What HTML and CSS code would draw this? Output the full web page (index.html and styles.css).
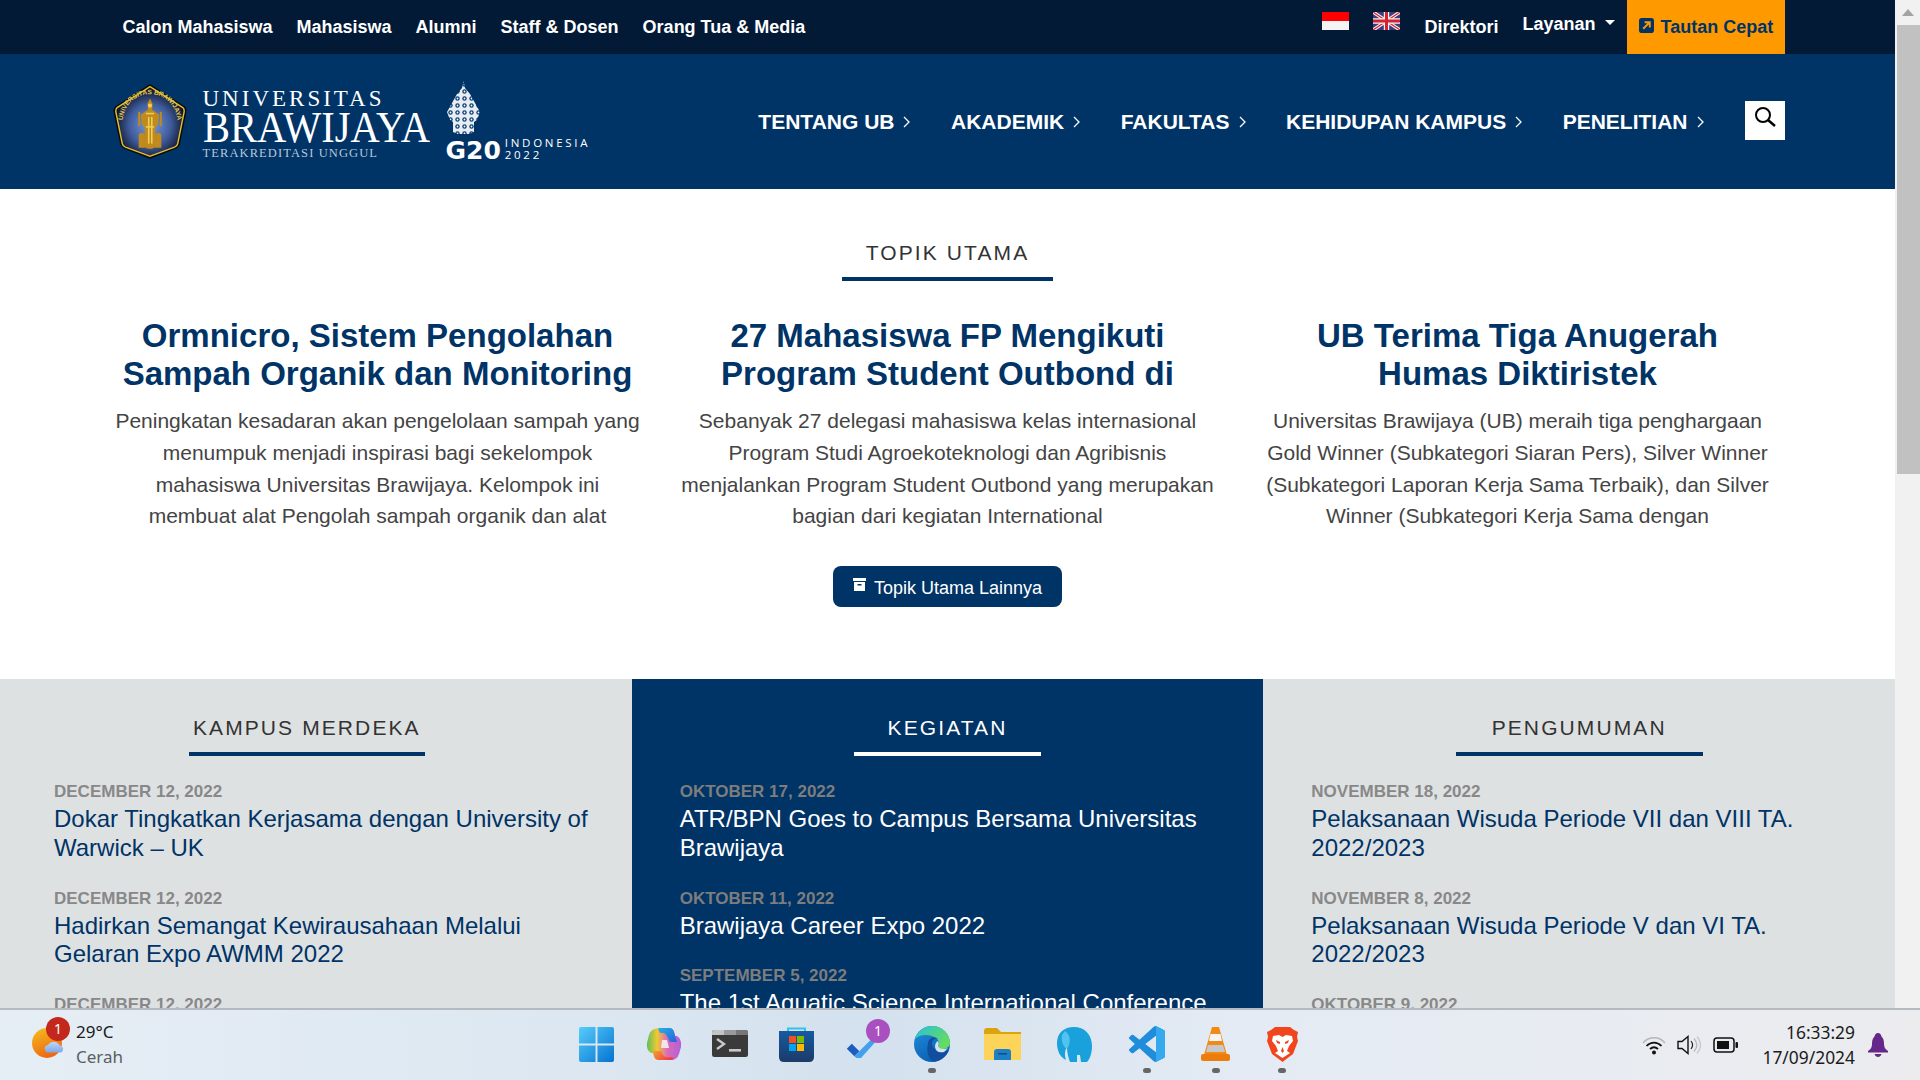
FILE: index.html
```html
<!DOCTYPE html>
<html lang="en">
<head>
  <meta charset="UTF-8">
  <meta name="viewport" content="width=device-width, initial-scale=1.0">
  <title>Universitas Brawijaya</title>
  <link rel="stylesheet" href="styles.css">
</head>
<body>

<div class="window">
  <div class="page">

    <!-- top bar -->
    <div class="topbar">
      <div class="container topbar-inner">
        <nav class="toplinks">
          <a>Calon Mahasiswa</a>
          <a>Mahasiswa</a>
          <a>Alumni</a>
          <a>Staff &amp; Dosen</a>
          <a>Orang Tua &amp; Media</a>
        </nav>
        <div class="topright">
          <svg class="flag" viewBox="0 0 27 18"><rect width="27" height="9" fill="#ff0000"/><rect y="9" width="27" height="9" fill="#f4f4f4"/></svg>
          <svg class="flag flag-uk" viewBox="0 0 27 18">
            <rect width="27" height="18" fill="#3c3b7c"/>
            <path d="M0 0L27 18M27 0L0 18" stroke="#f3f3f3" stroke-width="3.4"/>
            <path d="M0 0L27 18M27 0L0 18" stroke="#d8212f" stroke-width="1.2"/>
            <path d="M13.5 0V18M0 9H27" stroke="#f3f3f3" stroke-width="5.4"/>
            <path d="M13.5 0V18M0 9H27" stroke="#d8212f" stroke-width="3"/>
          </svg>
          <a class="direktori">Direktori</a>
          <a class="layanan">Layanan<span class="caret"></span></a>
          <a class="quick">
            <svg class="quick-icon" viewBox="0 0 16 16"><rect width="16" height="16" rx="3" fill="#003366"/><path d="M4.5 11.5L11 5M6 4.5H11.5V10" fill="none" stroke="#ff9900" stroke-width="2"/></svg>
            Tautan Cepat
          </a>
        </div>
      </div>
    </div>

    <!-- header with logo and main menu -->
    <header class="header">
      <div class="container header-inner">
        <div class="logo">
          <svg class="crest" viewBox="1 0 72 74">
            <defs>
              <radialGradient id="crestFill" cx="50%" cy="55%" r="55%">
                <stop offset="0" stop-color="#7a9ce0"/>
                <stop offset="0.55" stop-color="#3f5c9c"/>
                <stop offset="1" stop-color="#070a18"/>
              </radialGradient>
              <path id="crestArc" d="M10 45C9 22 22 11 37 11S65 22 64 45"/>
            </defs>
            <path d="M37 1L71 23Q73 25 72.500 28L66 60Q65 63 62 64L39 73Q37 74 35 73L12 64Q9 63 8 60L1.500 28Q1 25 3 23Z" fill="#0a0a0a"/>
            <path d="M37 3.500L69 24Q70.500 25 70.300 28L64 59Q63.500 61.500 61 62.500L38 71Q37 71.500 36 71L13 62.500Q10.500 61.500 10 59L3.700 28Q3.500 25 5 24Z" fill="url(#crestFill)" stroke="#e3bf2d" stroke-width="1.4"/>
            <text class="crest-text"><textPath href="#crestArc" startOffset="50%" text-anchor="middle">UNIVERSITAS BRAWIJAYA</textPath></text>
            <g fill="#c08a1c">
              <path d="M37 15L39.500 20L39 26L42 28L46 31L45 40L42 44L43 62L39 64H35L31 62L32 44L29 40L28 31L32 28L35 26L34.500 20Z"/>
              <path d="M26 50Q29 47 32 50V63H26ZM42 50Q45 47 48 50V63H42Z"/>
              <rect x="25.500" y="28" width="2" height="14"/>
              <rect x="46.500" y="28" width="2" height="14"/>
            </g>
            <g fill="#efd055">
              <rect x="35" y="33" width="1.500" height="26"/>
              <rect x="38" y="33" width="1.500" height="26"/>
              <circle cx="37" cy="22" r="2"/>
              <rect x="33" y="29" width="8" height="1.500"/>
              <rect x="33" y="42" width="8" height="1.500"/>
            </g>
          </svg>
          <div class="wordmark">
            <span class="wm-top">UNIVERSITAS</span>
            <span class="wm-name">BRAWIJAYA</span>
            <span class="wm-sub">TERAKREDITASI UNGGUL</span>
          </div>
          <div class="g20">
            <svg class="gunungan" viewBox="0 0 33 53">
              <defs>
                <pattern id="batik" width="7" height="7" patternUnits="userSpaceOnUse">
                  <rect width="7" height="7" fill="#e8edf3"/>
                  <circle cx="3.500" cy="3.500" r="2.200" fill="#0d3f73"/>
                  <circle cx="3.500" cy="3.500" r="0.900" fill="#ffffff"/>
                </pattern>
              </defs>
              <path d="M16.500 0L18 7L23 13L28 22L33 31L30 39L27 41V51L22 53H11L6 51V41L3 39L0 31L5 22L10 13L15 7Z" fill="url(#batik)"/>
            </svg>
            <div class="g20-row">
              <span class="g20-mark">G20</span>
              <span class="g20-place">INDONESIA<br>2022</span>
            </div>
          </div>
        </div>
        <nav class="mainmenu">
          <a>TENTANG UB<svg class="chev" viewBox="0 0 9 14"><path d="M2 2L7 7L2 12"/></svg></a>
          <a>AKADEMIK<svg class="chev" viewBox="0 0 9 14"><path d="M2 2L7 7L2 12"/></svg></a>
          <a>FAKULTAS<svg class="chev" viewBox="0 0 9 14"><path d="M2 2L7 7L2 12"/></svg></a>
          <a>KEHIDUPAN KAMPUS<svg class="chev" viewBox="0 0 9 14"><path d="M2 2L7 7L2 12"/></svg></a>
          <a>PENELITIAN<svg class="chev" viewBox="0 0 9 14"><path d="M2 2L7 7L2 12"/></svg></a>
        </nav>
        <div class="searchbox">
          <svg viewBox="0 0 22 22"><circle cx="9" cy="9" r="7" fill="none" stroke="#000" stroke-width="2"/><path d="M14 14L21 20" stroke="#000" stroke-width="2.400"/></svg>
        </div>
      </div>
    </header>

    <!-- main topics -->
    <section class="topics">
      <div class="section-title-wrap">
        <h2 class="section-title title-topik">TOPIK UTAMA</h2>
      </div>
      <div class="container topic-grid">
        <article class="topic">
          <h3>Ormnicro, Sistem Pengolahan<br>Sampah Organik dan Monitoring</h3>
          <p>Peningkatan kesadaran akan pengelolaan sampah yang<br>menumpuk menjadi inspirasi bagi sekelompok<br>mahasiswa Universitas Brawijaya. Kelompok ini<br>membuat alat Pengolah sampah organik dan alat</p>
        </article>
        <article class="topic">
          <h3>27 Mahasiswa FP Mengikuti<br>Program Student Outbond di</h3>
          <p>Sebanyak 27 delegasi mahasiswa kelas internasional<br>Program Studi Agroekoteknologi dan Agribisnis<br>menjalankan Program Student Outbond yang merupakan<br>bagian dari kegiatan International</p>
        </article>
        <article class="topic">
          <h3>UB Terima Tiga Anugerah<br>Humas Diktiristek</h3>
          <p>Universitas Brawijaya (UB) meraih tiga penghargaan<br>Gold Winner (Subkategori Siaran Pers), Silver Winner<br>(Subkategori Laporan Kerja Sama Terbaik), dan Silver<br>Winner (Subkategori Kerja Sama dengan</p>
        </article>
      </div>
      <div class="more-wrap">
        <a class="more-btn">
          <svg viewBox="0 0 13 13"><path d="M0 0H13V3H0ZM1 4H12V13H1Z" fill="#fff"/><rect x="4.500" y="6" width="4" height="1.500" fill="#003366"/></svg>
          Topik Utama Lainnya
        </a>
      </div>
    </section>

    <!-- news columns -->
    <section class="columns">
      <div class="col col-first">
        <div class="section-title-wrap">
          <h2 class="section-title title-merdeka">KAMPUS MERDEKA</h2>
        </div>
        <div class="news">
          <div class="date">December 12, 2022</div>
          <a class="news-title">Dokar Tingkatkan Kerjasama dengan University of Warwick – UK</a>
        </div>
        <div class="news">
          <div class="date">December 12, 2022</div>
          <a class="news-title">Hadirkan Semangat Kewirausahaan Melalui Gelaran Expo AWMM 2022</a>
        </div>
        <div class="news">
          <div class="date">December 12, 2022</div>
        </div>
      </div>
      <div class="col col-dark">
        <div class="section-title-wrap">
          <h2 class="section-title title-kegiatan">KEGIATAN</h2>
        </div>
        <div class="news">
          <div class="date">Oktober 17, 2022</div>
          <a class="news-title">ATR/BPN Goes to Campus Bersama Universitas Brawijaya</a>
        </div>
        <div class="news">
          <div class="date">Oktober 11, 2022</div>
          <a class="news-title">Brawijaya Career Expo 2022</a>
        </div>
        <div class="news">
          <div class="date">September 5, 2022</div>
          <a class="news-title">The 1st Aquatic Science International Conference</a>
        </div>
      </div>
      <div class="col">
        <div class="section-title-wrap">
          <h2 class="section-title title-pengumuman">PENGUMUMAN</h2>
        </div>
        <div class="news">
          <div class="date">November 18, 2022</div>
          <a class="news-title">Pelaksanaan Wisuda Periode VII dan VIII TA. 2022/2023</a>
        </div>
        <div class="news">
          <div class="date">November 8, 2022</div>
          <a class="news-title">Pelaksanaan Wisuda Periode V dan VI TA. 2022/2023</a>
        </div>
        <div class="news">
          <div class="date">Oktober 9, 2022</div>
        </div>
      </div>
    </section>
  </div>

  <div class="scrollbar">
    <div class="scroll-btn"><span class="scroll-arrow"></span></div>
    <div class="scroll-thumb"></div>
  </div>
</div>

<!-- windows taskbar -->
<footer class="taskbar">
  <div class="weather">
    <div class="weather-icon">
      <svg viewBox="0 0 34 34">
        <defs>
          <linearGradient id="sun" x1="0" y1="0" x2="0.400" y2="1"><stop offset="0" stop-color="#f4c020"/><stop offset="1" stop-color="#ee6a12"/></linearGradient>
          <linearGradient id="cloud" x1="0" y1="0" x2="0" y2="1"><stop offset="0" stop-color="#bcd6f8"/><stop offset="1" stop-color="#7fa8ea"/></linearGradient>
        </defs>
        <circle cx="15" cy="15" r="15" fill="url(#sun)"/>
        <path d="M13 22a3.500 3.500 0 0 1 3-5a7 7 0 0 1 12 0.500a3.500 3.500 0 0 1 3 4.500a3 3 0 0 1-3 2.500H16a3 3 0 0 1-3-2.500Z" fill="url(#cloud)"/>
      </svg>
      <span class="weather-badge">1</span>
    </div>
    <div class="weather-text">
      <div class="temp">29°C</div>
      <div class="cond">Cerah</div>
    </div>
  </div>

  <div class="apps">
    <div class="app app-win">
      <svg viewBox="0 0 36 36">
        <defs><linearGradient id="win" x1="0" y1="0" x2="1" y2="1"><stop offset="0" stop-color="#55cdfb"/><stop offset="1" stop-color="#0672cf"/></linearGradient></defs>
        <path d="M2 0H17V17H0V2Q0 0 2 0ZM19 0H34Q36 0 36 2V17H19ZM0 19H17V36H2Q0 36 0 34ZM19 19H36V34Q36 36 34 36H19Z" fill="url(#win)"/>
      </svg>
    </div>
    <div class="app app-copilot">
      <svg viewBox="0 0 36 34">
        <defs>
          <linearGradient id="cpBase" x1="0" y1="0" x2="1" y2="0"><stop offset="0" stop-color="#5cc05c"/><stop offset="0.3" stop-color="#f0c832"/><stop offset="0.6" stop-color="#d96bb8"/><stop offset="1" stop-color="#b45fd8"/></linearGradient>
          <linearGradient id="cpTop" x1="0" y1="0" x2="1" y2="1"><stop offset="0" stop-color="#20b4e4"/><stop offset="1" stop-color="#2d5fdc"/></linearGradient>
          <linearGradient id="cpBot" x1="0" y1="0" x2="1" y2="0.500"><stop offset="0" stop-color="#f7a02c"/><stop offset="1" stop-color="#ee3f48"/></linearGradient>
        </defs>
        <path d="M14 1H23Q27 1 28 5L29 9H31Q36 12 35 20L33 27Q31 33 25 33H13Q9 33 8 29L7 26H5Q0 23 1 16L3 8Q5 1 14 1Z" fill="url(#cpBase)"/>
        <path d="M12 1.500L14 1H23Q27 1 28 5L31 15H24L21 9Q19 5 14 6Z" fill="url(#cpTop)"/>
        <path d="M8 29L7 24H15L17 28Q19 31 25 30L28 31Q27 33 25 33H13Q9 33 8 29Z" fill="url(#cpBot)"/>
        <path d="M16 13H21L23 21H15Z" fill="#f6e4ea"/>
      </svg>
    </div>
    <div class="app app-term">
      <svg viewBox="0 0 36 27">
        <rect width="36" height="27" rx="2.500" fill="#3a3a3a"/>
        <path d="M0 2.500Q0 0 2.500 0H12V5H0Z" fill="#c4c4c4"/><rect x="12" width="12" height="5" fill="#9a9a9a"/><path d="M24 0H33.500Q36 0 36 2.500V5H24Z" fill="#777"/>
        <path d="M5 9L12 14L5 19" fill="none" stroke="#c8c8c8" stroke-width="2.400"/><rect x="17" y="19" width="12" height="2.600" fill="#c8c8c8"/>
      </svg>
    </div>
    <div class="app app-store">
      <svg viewBox="0 0 35 35">
        <defs><linearGradient id="bag" x1="0" y1="0" x2="0" y2="1"><stop offset="0" stop-color="#165ba2"/><stop offset="1" stop-color="#1c3a68"/></linearGradient></defs>
        <path d="M9 6V1.500H26V6" fill="none" stroke="#31c2ee" stroke-width="2"/>
        <path d="M0 4H35V30Q35 35 30 35H5Q0 35 0 30Z" fill="url(#bag)"/>
        <rect x="10" y="9" width="7" height="7" fill="#f25022"/><rect x="18" y="9" width="7" height="7" fill="#7fba00"/><rect x="10" y="17" width="7" height="7" fill="#00a4ef"/><rect x="18" y="17" width="7" height="7" fill="#ffb900"/>
      </svg>
    </div>
    <div class="app app-todo">
      <svg viewBox="0 0 34 24">
        <path d="M0 13L6 7L15 16L9 22Z" fill="#1e5bc0"/>
        <path d="M9 22L15 16L30 1L34 5L17 24Q13 26 9 22Z" fill="#42a0ec"/>
      </svg>
      <span class="todo-badge">1</span>
    </div>
    <div class="app app-edge">
      <svg viewBox="0 0 36 36">
        <defs>
          <linearGradient id="edgeA" x1="0" y1="0" x2="1" y2="0.600"><stop offset="0" stop-color="#2abfd8"/><stop offset="1" stop-color="#66dc5e"/></linearGradient>
          <linearGradient id="edgeB" x1="0" y1="0" x2="0.500" y2="1"><stop offset="0" stop-color="#1f8fdc"/><stop offset="1" stop-color="#0d5fb6"/></linearGradient>
        </defs>
        <circle cx="18" cy="18" r="18" fill="url(#edgeB)"/>
        <path d="M1 13C4 4 11 0 18 0C29 0 36 8 36 17C36 21 32 23 28 23C26 23 24 22 24 20C26 18 25 14 22 12C16 8 6 8 1 13Z" fill="url(#edgeA)"/>
        <path d="M14 18C14 12 20 10 24 13C20 12 17 15 18 19C20 26 30 28 35 24C32 31 26 35 20 35.500C14 33 12 25 14 18Z" fill="#0f4f9e"/>
        <path d="M24 20C25 23 30 24 34 22L30 26C26 27 22 26 21 21C21 18 22 16 24 15C25 17 25 19 24 20Z" fill="#d6e3ef"/>
      </svg>
      <span class="dot"></span>
    </div>
    <div class="app app-files">
      <svg viewBox="0 0 37 32">
        <path d="M0 3Q0 0 3 0H13L17 4H37V8H0Z" fill="#dba40c"/>
        <path d="M0 6H37V32H0Z" fill="#fdd45a"/>
        <path d="M10 32V24Q10 21 13 21H24Q27 21 27 24V32Z" fill="#1d7fc4"/>
        <rect x="14" y="25" width="9" height="1.500" fill="#0c4f88"/>
      </svg>
    </div>
    <div class="app app-mamp">
      <svg viewBox="0 0 35 35">
        <path d="M17 0C27 0 35 7 35 19C35 26 33 32 30 35H24L23 28H20V35H13C11 30 10 25 10 20C7 25 8 29 9 33C3 30 0 24 0 16C0 6 7 0 17 0Z" fill="#19a1dc"/>
        <path d="M8 4C14 8 14 16 10 22C6 20 4 14 5 8Z" fill="#52c2ef"/>
      </svg>
    </div>
    <div class="app app-vscode">
      <svg viewBox="0 0 24 24">
        <path d="M23.150 2.587L18.210.21a1.494 1.494 0 0 0-1.705.29l-9.460 8.630-4.120-3.128a.999.999 0 0 0-1.276.057L.327 7.261A1 1 0 0 0 .326 8.740L3.899 12 .326 15.260a1 1 0 0 0 .001 1.479L1.650 17.940a.999.999 0 0 0 1.276.057l4.120-3.128 9.460 8.630a1.492 1.492 0 0 0 1.704.29l4.942-2.377A1.500 1.500 0 0 0 24 20.060V3.939a1.500 1.500 0 0 0-.850-1.352zm-5.146 14.861L10.826 12l7.178-5.448v10.896z" fill="#1f8ddb"/>
        <path d="M16.500.5a1.494 1.494 0 0 1 1.710-.29l4.940 2.377A1.500 1.500 0 0 1 24 3.939V20.060a1.500 1.500 0 0 1-.850 1.352l-4.940 2.378a1.492 1.492 0 0 1-1.710-.29c.7.500 1.500 0 1.500-.8V1.300c0-.8-.800-1.300-1.500-.800z" fill="#35a9ee"/>
      </svg>
      <span class="dot"></span>
    </div>
    <div class="app app-vlc">
      <svg viewBox="0 0 29 34">
        <path d="M11 0H18L26 28H3Z" fill="#f28a13"/>
        <path d="M9.500 7H19.500L21 14H8Z" fill="#f4f4f4"/>
        <path d="M7 18H22L24 25H5Z" fill="#c8c8c8"/>
        <path d="M2 27H27Q29 27 29 29V32Q29 34 27 34H2Q0 34 0 32V29Q0 27 2 27Z" fill="#ea7d0c"/>
      </svg>
      <span class="dot"></span>
    </div>
    <div class="app app-brave">
      <svg viewBox="0 0 31 35">
        <path d="M8 0H23L27 3L31 5L30 10L31 14L26 27L18 33L15.500 35L13 33L5 27L0 14L1 10L0 5L4 3Z" fill="#f1461d"/>
        <path d="M6 9L12 8L15.500 10L19 8L25 9L26 14L22 19L20 24L23 26L15.500 31L8 26L11 24L9 19L5 14Z" fill="#ffffff"/>
        <path d="M9 13L13 15V17L10 16ZM22 13L18 15V17L21 16ZM14 24L15.500 20L17 24L15.500 26Z" fill="#f1461d"/>
      </svg>
      <span class="dot"></span>
    </div>
  </div>

  <div class="tray">
    <svg class="tray-wifi" viewBox="0 0 24 20">
      <path d="M1 8C7 1 17 1 23 8" fill="none" stroke="#b5b5b5" stroke-width="1.300"/>
      <path d="M4.500 11C9 6.500 15 6.500 19.500 11" fill="none" stroke="#111" stroke-width="1.700"/>
      <path d="M8 14C10.500 11.800 13.500 11.800 16 14" fill="none" stroke="#111" stroke-width="1.700"/>
      <circle cx="12" cy="17.500" r="2" fill="#111"/>
    </svg>
    <svg class="tray-vol" viewBox="0 0 24 20">
      <path d="M1 6.500H5L11 1.500V18.500L5 13.500H1Z" fill="none" stroke="#111" stroke-width="1.400"/>
      <path d="M14 6C16 8.500 16 11.500 14 14" fill="none" stroke="#222" stroke-width="1.200"/>
      <path d="M17 3.500C20.500 7.500 20.500 12.500 17 16.500" fill="none" stroke="#b5b5b5" stroke-width="1.200"/>
      <path d="M20 1.500C24.500 7 24.500 13 20 18.500" fill="none" stroke="#c8c8c8" stroke-width="1.200"/>
    </svg>
    <svg class="tray-bat" viewBox="0 0 25 16">
      <rect x="1" y="1" width="20" height="14" rx="3" fill="none" stroke="#111" stroke-width="1.500"/>
      <rect x="4" y="4" width="12" height="8" fill="#111"/>
      <rect x="22.500" y="5" width="2.500" height="6" rx="1" fill="#111"/>
    </svg>
    <div class="clock">
      <div>16:33:29</div>
      <div>17/09/2024</div>
    </div>
    <svg class="tray-bell" viewBox="0 0 20 24">
      <path d="M10 0C12 0 13 1.500 13.500 3.500C15.500 5 16 8 16 11C16 14 17 16 20 18V19.500H0V18C3 16 4 14 4 11C4 8 4.500 5 6.500 3.500C7 1.500 8 0 10 0Z" fill="#66278a"/>
      <path d="M6.500 21H13.500C13 23 11.500 24 10 24C8.500 24 7 23 6.500 21Z" fill="#66278a"/>
    </svg>
  </div>
</footer>

</body>
</html>
```

FILE: styles.css
```css
body {
  margin: 0;
  height: 1080px;
  overflow: hidden;
  display: flex;
  flex-direction: column;
  font-family: "Liberation Sans", Arial, sans-serif;
  background-color: #fff;
}
a {
  color: inherit;
  text-decoration: none;
}
h2, h3, p {
  margin: 0;
}

.window {
  height: 1008px;
  display: flex;
  overflow: hidden;
}
.page {
  flex: 1;
  min-width: 0;
}
.container {
  width: 1710px;
  margin: 0 auto;
}

/* top bar */
.topbar {
  height: 54px;
  background-color: #021a36;
  color: #fff;
}
.topbar-inner {
  height: 54px;
  display: flex;
  justify-content: space-between;
}
.toplinks {
  display: flex;
  align-items: center;
  gap: 24px;
  padding-left: 30px;
  font-size: 18px;
  font-weight: bold;
}
.topright {
  display: flex;
  align-items: center;
  font-size: 18px;
  font-weight: bold;
  padding-right: 18px;
}
.flag {
  width: 27px;
  height: 18px;
  margin-right: 24px;
  margin-bottom: 12px;
}
.direktori {
  margin-right: 24px;
}
.layanan {
  display: flex;
  align-items: center;
  margin-bottom: 6px;
  margin-right: 12px;
}
.caret {
  border: 5px solid transparent;
  border-top-color: #fff;
  border-bottom-width: 0;
  margin-left: 9px;
  margin-top: -4px;
}
.quick {
  height: 54px;
  width: 158px;
  box-sizing: border-box;
  padding-left: 12px;
  display: flex;
  align-items: center;
  gap: 7px;
  background-color: #ff9900;
  color: #003366;
}
.quick-icon {
  width: 15px;
  height: 15px;
  margin-bottom: 3px;
}

/* header */
.header {
  height: 135px;
  background-color: #003366;
}
.header-inner {
  height: 135px;
  display: flex;
  align-items: center;
}
.logo {
  display: flex;
  margin-left: 19px;
  color: #fff;
}
.crest {
  width: 76px;
  height: 76px;
}
.crest-text {
  font-size: 6.400px;
  font-weight: bold;
  fill: #e4c94a;
}
.wordmark {
  display: flex;
  flex-direction: column;
  margin-left: 15px;
  margin-top: 5.500px;
  font-family: "Liberation Serif", serif;
  width: 243px;
  white-space: nowrap;
}
.wm-top {
  font-size: 23px;
  line-height: 21px;
  letter-spacing: 3px;
}
.wm-name {
  font-size: 45px;
  line-height: 36px;
  transform: scaleX(0.9);
  transform-origin: left center;
}
.wm-sub {
  font-size: 12.500px;
  line-height: 12px;
  letter-spacing: 1.100px;
  margin-top: 2px;
  color: #b9c8d8;
}
.g20 {
  display: flex;
  flex-direction: column;
  margin-top: -2px;
}
.gunungan {
  width: 33px;
  height: 53px;
  margin-left: 1px;
}
.g20-row {
  display: flex;
  align-items: flex-end;
  margin-top: 3px;
}
.g20-mark {
  font-family: "DejaVu Sans", sans-serif;
  font-size: 25px;
  line-height: 20px;
  font-weight: bold;
}
.g20-place {
  font-family: "Open Sans", sans-serif;
  font-size: 11.500px;
  line-height: 12px;
  letter-spacing: 2.700px;
  margin-left: 4px;
}
.mainmenu {
  display: flex;
  align-items: center;
  margin-left: auto;
  gap: 39.500px;
  color: #fff;
  font-size: 21px;
  font-weight: bold;
}
.mainmenu a {
  display: flex;
  align-items: center;
}
.chev {
  width: 9px;
  height: 14px;
  margin-left: 8px;
  fill: none;
  stroke: #fff;
  stroke-width: 1.300;
}
.searchbox {
  width: 40px;
  height: 39px;
  margin-left: 40px;
  margin-right: 18px;
  margin-top: -2px;
  background-color: #fff;
  display: flex;
  justify-content: center;
}
.searchbox svg {
  width: 22px;
  height: 22px;
  margin-top: 5px;
}

/* section headings */
.section-title-wrap {
  text-align: center;
}
.section-title {
  display: inline-block;
  font-size: 21px;
  font-weight: normal;
  line-height: 24px;
  letter-spacing: 2.100px;
  color: #333;
  padding-top: 1px;
  padding-bottom: 12px;
  border-bottom: 4px solid #003366;
}
.title-topik {
  padding-left: 24px;
  padding-right: 24px;
}
.title-merdeka {
  padding-left: 4px;
  padding-right: 4px;
}
.title-kegiatan {
  padding-left: 34px;
  padding-right: 34px;
}
.title-pengumuman {
  padding-left: 36px;
  padding-right: 36px;
}

/* main topics */
.topics {
  height: 490px;
  box-sizing: border-box;
  padding-top: 51px;
}
.topic-grid {
  display: grid;
  grid-template-columns: repeat(3, 570px);
  margin-top: 36px;
}
.topic {
  text-align: center;
  padding: 0 15px;
}
.topic h3 {
  font-size: 33px;
  line-height: 38px;
  color: #003366;
}
.topic p {
  margin-top: 12px;
  font-size: 21px;
  line-height: 31.800px;
  color: #444;
}
.more-wrap {
  display: flex;
  justify-content: center;
  margin-top: 34px;
}
.more-btn {
  display: flex;
  align-items: center;
  gap: 8px;
  height: 41px;
  box-sizing: border-box;
  padding: 3px 20px 0;
  border-radius: 8px;
  background-color: #003366;
  color: #fff;
  font-size: 18px;
}
.more-btn svg {
  width: 13px;
  height: 13px;
  margin-bottom: 7px;
}

/* news columns */
.columns {
  display: grid;
  grid-template-columns: repeat(3, 1fr);
  height: 329px;
  overflow: hidden;
}
.col {
  padding: 36px 40px 0 48px;
  background-color: #dee1e2;
}
.col .section-title-wrap {
  margin-left: -48px;
  margin-right: -40px;
}
.col-first {
  padding-left: 54px;
}
.col-first .section-title-wrap {
  margin-left: -54px;
  margin-right: -22px;
}
.col-dark {
  background-color: #003366;
  color: #fff;
}
.col-dark .section-title {
  color: #fff;
  border-bottom-color: #fff;
}
.news {
  margin-bottom: 24px;
}
.section-title-wrap + .news {
  margin-top: 24px;
}
.date {
  font-size: 17px;
  line-height: 24px;
  margin-bottom: 1px;
  font-weight: bold;
  text-transform: uppercase;
  color: #888;
}
.col-dark .date {
  color: #7d7d7d;
}
.news-title {
  display: block;
  font-size: 24px;
  line-height: 28.800px;
  color: #003366;
}
.col-dark .news-title {
  color: #fff;
}

/* fake browser scrollbar */
.scrollbar {
  width: 25px;
  background-color: #f1f1f1;
  display: flex;
  flex-direction: column;
  align-items: flex-end;
}
.scroll-btn {
  width: 25px;
  height: 25px;
  display: flex;
  align-items: center;
  justify-content: center;
}
.scroll-arrow {
  border: 6px solid transparent;
  border-bottom: 7px solid #a3a3a3;
  border-top-width: 0;
}
.scroll-thumb {
  width: 23px;
  height: 449px;
  background-color: #c1c1c1;
}

/* taskbar */
.taskbar {
  height: 72px;
  box-sizing: border-box;
  border-top: 2px solid #b4babf;
  background: linear-gradient(90deg, #e6eef5 0%, #dce7f1 30%, #d4e1ee 45%, #e4ebf4 65%, #ececef 100%);
  display: flex;
  font-family: "Noto Sans", "Open Sans", sans-serif;
}
.weather {
  width: 562px;
  flex-shrink: 0;
  display: flex;
  color: #1b1b1b;
}
.weather-icon {
  position: relative;
  width: 34px;
  height: 34px;
  margin: 18px 0 0 32px;
}
.weather-icon svg {
  width: 34px;
  height: 34px;
}
.weather-badge {
  position: absolute;
  top: -11px;
  left: 14px;
  width: 24px;
  height: 24px;
  border-radius: 50%;
  background-color: #c4281c;
  color: #fff;
  font-size: 14px;
  line-height: 23px;
  text-align: center;
}
.weather-text {
  margin: 9px 0 0 10px;
  font-size: 17px;
}
.temp {
  line-height: 25px;
}
.cond {
  line-height: 25px;
  color: #5b5f63;
}
.apps {
  display: flex;
}
.app {
  position: relative;
  height: 70px;
  display: flex;
  justify-content: center;
  align-items: flex-start;
}
.app svg {
  margin-top: 17px;
}
.app-win { width: 68px; }
.app-win svg { width: 35px; height: 35px; }
.app-copilot { width: 67px; }
.app-copilot svg { width: 36px; height: 34px; }
.app-term { width: 66px; }
.app-term svg { width: 36px; height: 27px; margin-top: 20px; }
.app-store { width: 66px; }
.app-store svg { width: 35px; height: 35px; }
.app-todo { width: 68px; justify-content: flex-start; }
.app-todo svg { width: 30px; height: 20px; margin: 28px 0 0 17px; }
.app-edge { width: 69.500px; }
.app-edge svg { width: 36px; height: 36px; margin-top: 16px; }
.app-files { width: 71.500px; }
.app-files svg { width: 37px; height: 32px; margin-top: 18px; }
.app-mamp { width: 73px; }
.app-mamp svg { width: 35px; height: 35px; }
.app-vscode { width: 71px; }
.app-vscode svg { width: 36px; height: 36px; margin-top: 16px; }
.app-vlc { width: 67.500px; }
.app-vlc svg { width: 29px; height: 34px; }
.app-brave { width: 65.500px; }
.app-brave svg { width: 31px; height: 35px; }
.todo-badge {
  position: absolute;
  top: 9px;
  left: 37px;
  width: 24px;
  height: 24px;
  border-radius: 50%;
  background-color: #a94fbf;
  color: #fff;
  font-size: 14px;
  line-height: 23px;
  text-align: center;
}
.dot {
  position: absolute;
  left: 50%;
  top: 58px;
  width: 8px;
  height: 5px;
  margin-left: -4px;
  border-radius: 3px;
  background-color: #666;
}
.tray {
  margin-left: auto;
  display: flex;
  align-items: center;
  color: #1b1b1b;
}
.tray-wifi {
  width: 24px;
  height: 20px;
}
.tray-vol {
  width: 24px;
  height: 20px;
  margin-left: 11px;
}
.tray-bat {
  width: 25px;
  height: 16px;
  margin-left: 12px;
}
.clock {
  width: 117px;
  text-align: right;
  font-size: 17.400px;
  line-height: 25px;
}
.tray-bell {
  width: 20px;
  height: 24px;
  margin-left: 13px;
  margin-right: 32px;
}
```
